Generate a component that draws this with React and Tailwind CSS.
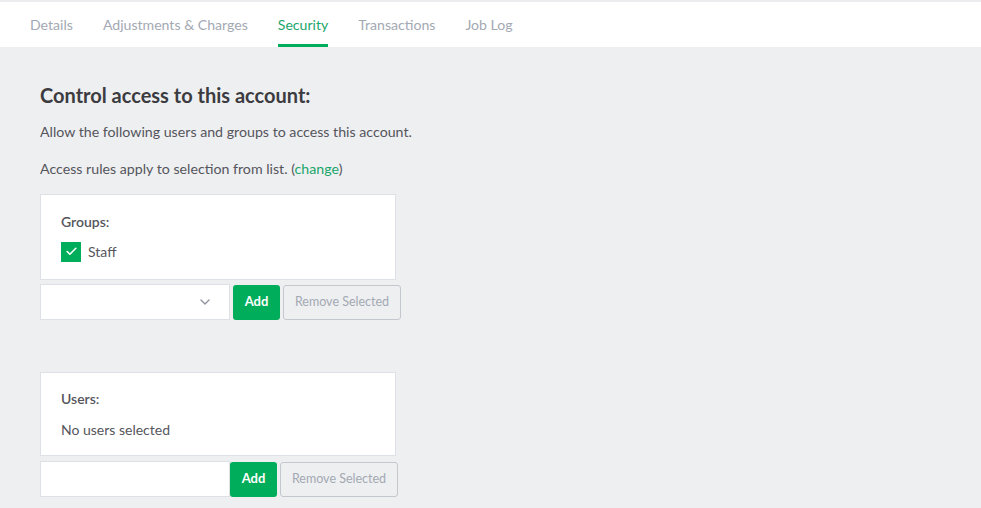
import { ChevronDown, Check } from "lucide-react";

const TABS = ["Details", "Adjustments & Charges", "Security", "Transactions", "Job Log"];

export default function App() {
  return (
    <div className="min-h-[508px] bg-[#eeeff1] font-['Lato',sans-serif] text-[#55555c]">
      <div className="border-t-2 border-[#ececee] bg-white">
        <nav className="flex h-[45px] gap-[30px] pl-[30px]">
          {TABS.map((t) => (
            <div
              key={t}
              className={
                "flex items-center border-b-[3px] pt-[3px] text-[14.1px] " +
                (t === "Security" ? "border-[#00ad5a] text-[#1aa66a]" : "border-transparent text-[#a3a9b3]")
              }
            >
              {t}
            </div>
          ))}
        </nav>
      </div>

      <div className="px-10 pt-[35px]">
        <h2 className="text-[20px] font-bold leading-[26px] text-[#3b3b40]">Control access to this account:</h2>
        <p className="mt-[14px] text-[14.2px] leading-[20px]">Allow the following users and groups to access this account.</p>
        <p className="mt-[17px] text-[14.2px] leading-[20px]">
          Access rules apply to selection from list. (<span className="text-[#1aa66a]">change</span>)
        </p>

        <div className="mt-[15px] w-[356px] border border-[#dde0e4] bg-white px-5 pb-[17px] pt-[17px]">
          <div className="text-[14px] font-semibold leading-[20px] text-[#55555c]">Groups:</div>
          <label className="mt-[9px] flex items-center gap-[7px] text-[14px]">
            <span className="grid h-5 w-5 place-items-center bg-[#00ad5a]">
              <Check size={13} strokeWidth={3} className="text-white" />
            </span>
            Staff
          </label>
        </div>
        <div className="mt-[4px] flex items-center gap-[3px]">
          <div className="flex h-[36px] w-[190px] items-center justify-end border border-[#dde0e4] bg-white pr-4">
            <ChevronDown size={16} strokeWidth={2} className="text-[#8d939c]" />
          </div>
          <button className="h-[35px] w-[47px] rounded-[3px] bg-[#00ad5a] text-[13px] font-bold text-white">Add</button>
          <button className="h-[35px] w-[118px] rounded-[3px] border border-[#c3c8cf] bg-[#eeeff1] text-[12.5px] text-[#a3a9b3]">
            Remove Selected
          </button>
        </div>

        <div className="mt-[52px] w-[356px] border border-[#dde0e4] bg-white px-5 pb-[15px] pt-[16px]">
          <div className="text-[14px] font-semibold leading-[20px] text-[#55555c]">Users:</div>
          <div className="mt-[11px] text-[14px] leading-[20px]">No users selected</div>
        </div>
        <div className="mt-[5px] flex items-center">
          <div className="h-[36px] w-[190px] border border-[#dde0e4] bg-white" />
          <button className="h-[35px] w-[47px] rounded-[3px] bg-[#00ad5a] text-[13px] font-bold text-white">Add</button>
          <button className="ml-[3px] h-[35px] w-[118px] rounded-[3px] border border-[#c3c8cf] bg-[#eeeff1] text-[12.5px] text-[#a3a9b3]">
            Remove Selected
          </button>
        </div>
      </div>
    </div>
  );
}
